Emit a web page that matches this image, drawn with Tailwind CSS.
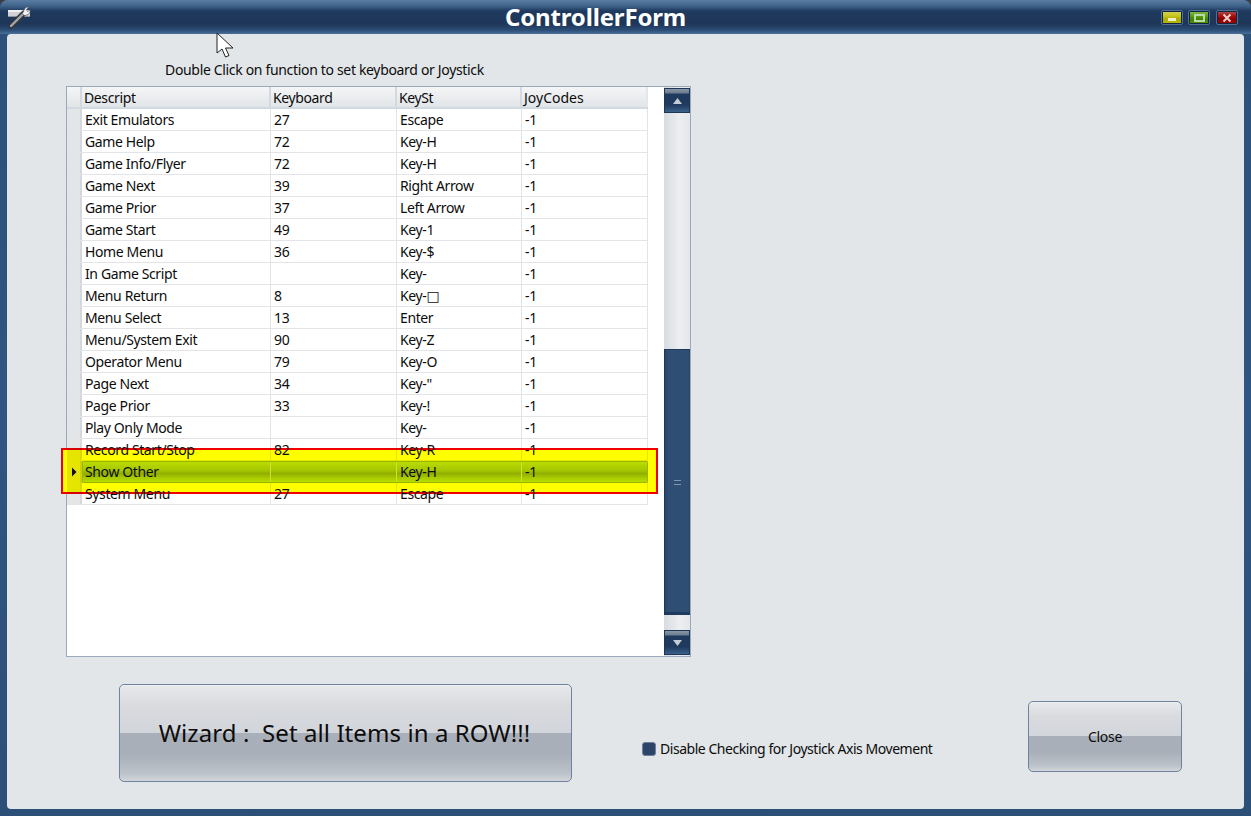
<!DOCTYPE html>
<html><head><meta charset="utf-8">
<script src="https://cdn.jsdelivr.net/npm/@tailwindcss/browser@4"></script>
</head>
<body class="m-0 overflow-hidden bg-[#3a3f46]">
<div class="relative w-[1251px] h-[816px] flex flex-col font-['Noto_Sans','DejaVu_Sans',sans-serif] text-[14px] text-[#0c0c0c] rounded-t-[8px] overflow-hidden bg-gradient-to-b from-[#2c5078] via-[#2f5582] to-[#2c4f78]">
  <!-- title bar -->
  <div class="h-[34px] flex items-center shrink-0 bg-[linear-gradient(180deg,#5c7ea3_0px,#3f638b_6px,#1e3a5f_11px,#1e3658_24px,#2b4d76_30px,#4a7099_34px)]">
    <div class="w-[32px] h-[34px] pl-[7px] pt-[6px] shrink-0">
      <svg width="24" height="24" viewBox="0 0 24 24">
        <rect x="1" y="4" width="22" height="7" fill="#cfd1d4"/>
        <path d="M1 4h22v2H1z" fill="#f0f0f0"/>
        <path d="M1 10h22v1H1z" fill="#8f959b"/>
        <path d="M4 20 L17 7" stroke="#34373c" stroke-width="5.4" stroke-linecap="round"/>
        <path d="M4 20 L17 7" stroke="#a4a8ac" stroke-width="2.4" stroke-linecap="round"/>
        <path d="M15.5 7.5 L17.5 3 Q19 .5 22 1 L19.5 3.5 L20.5 5.5 L23.2 4 Q23.5 8 19.5 9.2 L17 9.6 Z" fill="#f2f2f2" stroke="#55585c" stroke-width=".7"/>
      </svg>
    </div>
    <div class="flex-1 text-center text-white font-bold text-[24px] leading-[34px] tracking-[-0.15px]">ControllerForm</div>
    <div class="flex items-start pt-[1px] shrink-0 w-[92px] pl-[3px]">
      <div class="w-[20px] h-[13px] mr-[7px] shrink-0 rounded-[1px] border border-[#14263f] outline outline-[#4f6f94] bg-[linear-gradient(180deg,#cfcf50_0px,#c6c61a_4px,#a9a900_7px,#bebe0c_13px)] flex items-center justify-center pt-[3px]"><div class="w-[8px] h-[3px] bg-[#f0f0c8]"></div></div>
      <div class="w-[20px] h-[13px] mr-[8px] shrink-0 rounded-[1px] border border-[#14263f] outline outline-[#4f6f94] bg-[linear-gradient(180deg,#7fb84c_0px,#5a9e12_4px,#3f8200_7px,#4f9a08_13px)] flex items-center justify-center"><div class="w-[11px] h-[8px] border-2 border-[#bcd8a4]"></div></div>
      <div class="w-[20px] h-[13px] shrink-0 rounded-[1px] border border-[#14263f] outline outline-[#4f6f94] bg-[linear-gradient(180deg,#a84848_0px,#a81010_4px,#8c0000_7px,#b00404_13px)] flex items-center justify-center">
        <svg width="10" height="10" viewBox="0 0 10 10"><path d="M1.5 1.5L8.5 8.5M8.5 1.5L1.5 8.5" stroke="#eed0d0" stroke-width="2"/></svg>
      </div>
    </div>
  </div>

  <!-- client area -->
  <div class="mx-[7px] mb-[7px] flex-1 bg-[#e2e6e9] rounded-[4px] flex flex-col">
    <div class="pl-[158px] pt-[26px] h-[52px] leading-[20px] tracking-[-0.33px]">Double Click on function to set keyboard or Joystick</div>

    <!-- data grid -->
    <div class="ml-[59px] w-[625px] h-[571px] border border-[#9aa9bc] bg-white flex tracking-[-0.38px]">
      <div class="w-[581px] shrink-0 flex flex-col">
        <div class="flex h-[22px] bg-[linear-gradient(180deg,#f4f5f6,#e2e5e8)] border-b-2 border-[#d3d9e0]">
          <div class="w-[15px] border-r-2 border-[#d3d9e0]"></div>
          <div class="w-[189px] pl-[2px] border-r-2 border-[#d3d9e0] leading-[21px]">Descript</div>
          <div class="w-[126px] pl-[2px] border-r-2 border-[#d3d9e0] leading-[21px]">Keyboard</div>
          <div class="w-[125px] pl-[2px] border-r-2 border-[#d3d9e0] leading-[21px]">KeySt</div>
          <div class="w-[126px] pl-[2px] border-r-2 border-[#e4e6e9] leading-[21px] tracking-normal">JoyCodes</div>
        </div>
        <div class="flex h-[22px] border-b border-[#e2e4e7] leading-[21px]"><div class="w-[15px] border-r-2 border-[#d3d8de] bg-[#e3e6e9]"></div><div class="w-[189px] pl-[3px] border-r border-[#e2e4e7]">Exit Emulators</div><div class="w-[126px] pl-[3px] border-r border-[#e2e4e7]">27</div><div class="w-[125px] pl-[3px] border-r border-[#e2e4e7]">Escape</div><div class="w-[126px] pl-[3px] border-r border-[#e2e4e7]">-1</div></div>
        <div class="flex h-[22px] border-b border-[#e2e4e7] leading-[21px]"><div class="w-[15px] border-r-2 border-[#d3d8de] bg-[#e3e6e9]"></div><div class="w-[189px] pl-[3px] border-r border-[#e2e4e7]">Game Help</div><div class="w-[126px] pl-[3px] border-r border-[#e2e4e7]">72</div><div class="w-[125px] pl-[3px] border-r border-[#e2e4e7]">Key-H</div><div class="w-[126px] pl-[3px] border-r border-[#e2e4e7]">-1</div></div>
        <div class="flex h-[22px] border-b border-[#e2e4e7] leading-[21px]"><div class="w-[15px] border-r-2 border-[#d3d8de] bg-[#e3e6e9]"></div><div class="w-[189px] pl-[3px] border-r border-[#e2e4e7]">Game Info/Flyer</div><div class="w-[126px] pl-[3px] border-r border-[#e2e4e7]">72</div><div class="w-[125px] pl-[3px] border-r border-[#e2e4e7]">Key-H</div><div class="w-[126px] pl-[3px] border-r border-[#e2e4e7]">-1</div></div>
        <div class="flex h-[22px] border-b border-[#e2e4e7] leading-[21px]"><div class="w-[15px] border-r-2 border-[#d3d8de] bg-[#e3e6e9]"></div><div class="w-[189px] pl-[3px] border-r border-[#e2e4e7]">Game Next</div><div class="w-[126px] pl-[3px] border-r border-[#e2e4e7]">39</div><div class="w-[125px] pl-[3px] border-r border-[#e2e4e7]">Right Arrow</div><div class="w-[126px] pl-[3px] border-r border-[#e2e4e7]">-1</div></div>
        <div class="flex h-[22px] border-b border-[#e2e4e7] leading-[21px]"><div class="w-[15px] border-r-2 border-[#d3d8de] bg-[#e3e6e9]"></div><div class="w-[189px] pl-[3px] border-r border-[#e2e4e7]">Game Prior</div><div class="w-[126px] pl-[3px] border-r border-[#e2e4e7]">37</div><div class="w-[125px] pl-[3px] border-r border-[#e2e4e7]">Left Arrow</div><div class="w-[126px] pl-[3px] border-r border-[#e2e4e7]">-1</div></div>
        <div class="flex h-[22px] border-b border-[#e2e4e7] leading-[21px]"><div class="w-[15px] border-r-2 border-[#d3d8de] bg-[#e3e6e9]"></div><div class="w-[189px] pl-[3px] border-r border-[#e2e4e7]">Game Start</div><div class="w-[126px] pl-[3px] border-r border-[#e2e4e7]">49</div><div class="w-[125px] pl-[3px] border-r border-[#e2e4e7]">Key-1</div><div class="w-[126px] pl-[3px] border-r border-[#e2e4e7]">-1</div></div>
        <div class="flex h-[22px] border-b border-[#e2e4e7] leading-[21px]"><div class="w-[15px] border-r-2 border-[#d3d8de] bg-[#e3e6e9]"></div><div class="w-[189px] pl-[3px] border-r border-[#e2e4e7]">Home Menu</div><div class="w-[126px] pl-[3px] border-r border-[#e2e4e7]">36</div><div class="w-[125px] pl-[3px] border-r border-[#e2e4e7]">Key-$</div><div class="w-[126px] pl-[3px] border-r border-[#e2e4e7]">-1</div></div>
        <div class="flex h-[22px] border-b border-[#e2e4e7] leading-[21px]"><div class="w-[15px] border-r-2 border-[#d3d8de] bg-[#e3e6e9]"></div><div class="w-[189px] pl-[3px] border-r border-[#e2e4e7]">In Game Script</div><div class="w-[126px] pl-[3px] border-r border-[#e2e4e7]"></div><div class="w-[125px] pl-[3px] border-r border-[#e2e4e7]">Key-</div><div class="w-[126px] pl-[3px] border-r border-[#e2e4e7]">-1</div></div>
        <div class="flex h-[22px] border-b border-[#e2e4e7] leading-[21px]"><div class="w-[15px] border-r-2 border-[#d3d8de] bg-[#e3e6e9]"></div><div class="w-[189px] pl-[3px] border-r border-[#e2e4e7]">Menu Return</div><div class="w-[126px] pl-[3px] border-r border-[#e2e4e7]">8</div><div class="w-[125px] pl-[3px] border-r border-[#e2e4e7]">Key-□</div><div class="w-[126px] pl-[3px] border-r border-[#e2e4e7]">-1</div></div>
        <div class="flex h-[22px] border-b border-[#e2e4e7] leading-[21px]"><div class="w-[15px] border-r-2 border-[#d3d8de] bg-[#e3e6e9]"></div><div class="w-[189px] pl-[3px] border-r border-[#e2e4e7]">Menu Select</div><div class="w-[126px] pl-[3px] border-r border-[#e2e4e7]">13</div><div class="w-[125px] pl-[3px] border-r border-[#e2e4e7]">Enter</div><div class="w-[126px] pl-[3px] border-r border-[#e2e4e7]">-1</div></div>
        <div class="flex h-[22px] border-b border-[#e2e4e7] leading-[21px]"><div class="w-[15px] border-r-2 border-[#d3d8de] bg-[#e3e6e9]"></div><div class="w-[189px] pl-[3px] border-r border-[#e2e4e7]">Menu/System Exit</div><div class="w-[126px] pl-[3px] border-r border-[#e2e4e7]">90</div><div class="w-[125px] pl-[3px] border-r border-[#e2e4e7]">Key-Z</div><div class="w-[126px] pl-[3px] border-r border-[#e2e4e7]">-1</div></div>
        <div class="flex h-[22px] border-b border-[#e2e4e7] leading-[21px]"><div class="w-[15px] border-r-2 border-[#d3d8de] bg-[#e3e6e9]"></div><div class="w-[189px] pl-[3px] border-r border-[#e2e4e7]">Operator Menu</div><div class="w-[126px] pl-[3px] border-r border-[#e2e4e7]">79</div><div class="w-[125px] pl-[3px] border-r border-[#e2e4e7]">Key-O</div><div class="w-[126px] pl-[3px] border-r border-[#e2e4e7]">-1</div></div>
        <div class="flex h-[22px] border-b border-[#e2e4e7] leading-[21px]"><div class="w-[15px] border-r-2 border-[#d3d8de] bg-[#e3e6e9]"></div><div class="w-[189px] pl-[3px] border-r border-[#e2e4e7]">Page Next</div><div class="w-[126px] pl-[3px] border-r border-[#e2e4e7]">34</div><div class="w-[125px] pl-[3px] border-r border-[#e2e4e7]">Key-"</div><div class="w-[126px] pl-[3px] border-r border-[#e2e4e7]">-1</div></div>
        <div class="flex h-[22px] border-b border-[#e2e4e7] leading-[21px]"><div class="w-[15px] border-r-2 border-[#d3d8de] bg-[#e3e6e9]"></div><div class="w-[189px] pl-[3px] border-r border-[#e2e4e7]">Page Prior</div><div class="w-[126px] pl-[3px] border-r border-[#e2e4e7]">33</div><div class="w-[125px] pl-[3px] border-r border-[#e2e4e7]">Key-!</div><div class="w-[126px] pl-[3px] border-r border-[#e2e4e7]">-1</div></div>
        <div class="flex h-[22px] border-b border-[#e2e4e7] leading-[21px]"><div class="w-[15px] border-r-2 border-[#d3d8de] bg-[#e3e6e9]"></div><div class="w-[189px] pl-[3px] border-r border-[#e2e4e7]">Play Only Mode</div><div class="w-[126px] pl-[3px] border-r border-[#e2e4e7]"></div><div class="w-[125px] pl-[3px] border-r border-[#e2e4e7]">Key-</div><div class="w-[126px] pl-[3px] border-r border-[#e2e4e7]">-1</div></div>
        <div class="relative z-20 flex h-[22px] border-b border-black/10 leading-[21px]"><div class="w-[15px] border-r-2 border-black/5 bg-black/10"></div><div class="w-[189px] pl-[3px] border-r border-black/10">Record Start/Stop</div><div class="w-[126px] pl-[3px] border-r border-black/10">82</div><div class="w-[125px] pl-[3px] border-r border-black/10">Key-R</div><div class="w-[126px] pl-[3px] border-r border-black/10">-1</div></div>
        <div class="relative z-20 flex h-[22px] leading-[20px]"><div class="w-[15px] bg-black/10 border-r-2 border-black/10 flex items-center justify-center"><svg width="6" height="10" viewBox="0 0 6 10"><path d="M1 0.5L5.5 5L1 9.5Z" fill="#111"/></svg></div><div class="flex-1 flex rounded-[1px] border border-[#96b800] bg-[linear-gradient(180deg,#bbdc00_0%,#a6c800_40%,#92ae00_58%,#a8cc00_80%,#b8dc00_100%)]"><div class="w-[188px] pl-[2px] border-r border-[#d0e030]">Show Other</div><div class="w-[126px] border-r border-[#d0e030]"></div><div class="w-[125px] pl-[3px] border-r border-[#d0e030]">Key-H</div><div class="w-[124px] pl-[3px]">-1</div></div></div>
        <div class="relative z-20 flex h-[22px] border-b border-black/10 leading-[21px]"><div class="w-[15px] border-r-2 border-black/5 bg-black/10"></div><div class="w-[189px] pl-[3px] border-r border-black/10">System Menu</div><div class="w-[126px] pl-[3px] border-r border-black/10">27</div><div class="w-[125px] pl-[3px] border-r border-black/10">Escape</div><div class="w-[126px] pl-[3px] border-r border-black/10">-1</div></div>
      </div>
      <div class="flex-1"></div>
      <!-- scrollbar -->
      <div class="w-[26px] shrink-0 flex flex-col bg-[linear-gradient(90deg,#d8dce1,#eceef0_60%,#e4e7ea)] pt-[1px] pb-[1px]">
        <div class="h-[25px] shrink-0 border border-[#1e3658] bg-[linear-gradient(180deg,#8a96a6_0px,#6c7c90_4px,#1f3a5e_5px,#1f3a5e_16px,#3f6690_24px)] flex items-center justify-center"><svg width="9" height="6" viewBox="0 0 9 6"><path d="M4.5 0L9 6H0Z" fill="#c4ccd6"/></svg></div>
        <div class="h-[236px] shrink-0"></div>
        <div class="h-[266px] shrink-0 border-l border-[#1e3658] bg-[linear-gradient(90deg,#2a4768,#2f4e74_15%,#2f4e74_90%,#2a4768)] flex items-center justify-center shadow-[inset_0_1px_0_#1f3a5e,inset_0_-3px_0_#1f3a5e]"><div class="w-[7px] h-[5px] border-y border-[#8096ae]"></div></div>
        <div class="h-[15px] shrink-0"></div>
        <div class="h-[25px] shrink-0 border border-[#1e3658] bg-[linear-gradient(180deg,#8a96a6_0px,#6c7c90_4px,#1f3a5e_5px,#1f3a5e_16px,#3f6690_24px)] flex items-center justify-center"><svg width="9" height="6" viewBox="0 0 9 6"><path d="M4.5 6L9 0H0Z" fill="#c4ccd6"/></svg></div>
      </div>
    </div>

    <!-- bottom controls -->
    <div class="flex items-start relative">
      <button class="ml-[112px] mt-[27px] w-[453px] h-[98px] shrink-0 rounded-[5px] border border-[#6f83a0] text-[24px] text-[#0c0c0c] pb-[1px] pr-[2px] tracking-[0.08px] shadow-[inset_0_1px_0_#eeeff1] bg-[linear-gradient(180deg,#e8e9eb_0%,#d9dbdf_20%,#d2d5da_49.5%,#aab0b9_50%,#a9afb8_72%,#bcc2c9_92%,#d2d6da_100%)]">Wizard :&nbsp; Set all Items in a ROW!!!</button>
      <div class="ml-[70px] mt-[84px] flex items-center gap-[4px] shrink-0 leading-[14px]">
        <div class="w-[14px] h-[14px] rounded-[3px] bg-[#2b4468] border border-[#6d7f99]"></div>
        <span class="tracking-[-0.46px] pt-[1px]">Disable Checking for Joystick Axis Movement</span>
      </div>
      <button class="absolute left-[1021px] top-[44px] w-[154px] h-[71px] rounded-[5px] border border-[#6f83a0] text-[14px] tracking-[-0.3px] text-[#0c0c0c] shadow-[inset_0_1px_0_#eeeff1] bg-[linear-gradient(180deg,#e8e9eb_0%,#d9dbdf_20%,#d2d5da_49.5%,#aab0b9_50%,#a9afb8_72%,#bcc2c9_92%,#d2d6da_100%)]">Close</button>
    </div>
  </div>

  <!-- highlight annotation -->
  <div class="absolute left-[61px] top-[448px] w-[597px] h-[46px] bg-[#ffff00] border-2 border-[#f00000] z-10"></div>
  <!-- cursor -->
  <svg class="absolute left-[216px] top-[32px] z-30" width="20" height="28" viewBox="0 0 20 28"><path d="M1 1V21L6 17L9.5 25L13 23.5L9.5 16H17Z" fill="#fff" stroke="#222" stroke-width="1"/></svg>
</div>
</body></html>
